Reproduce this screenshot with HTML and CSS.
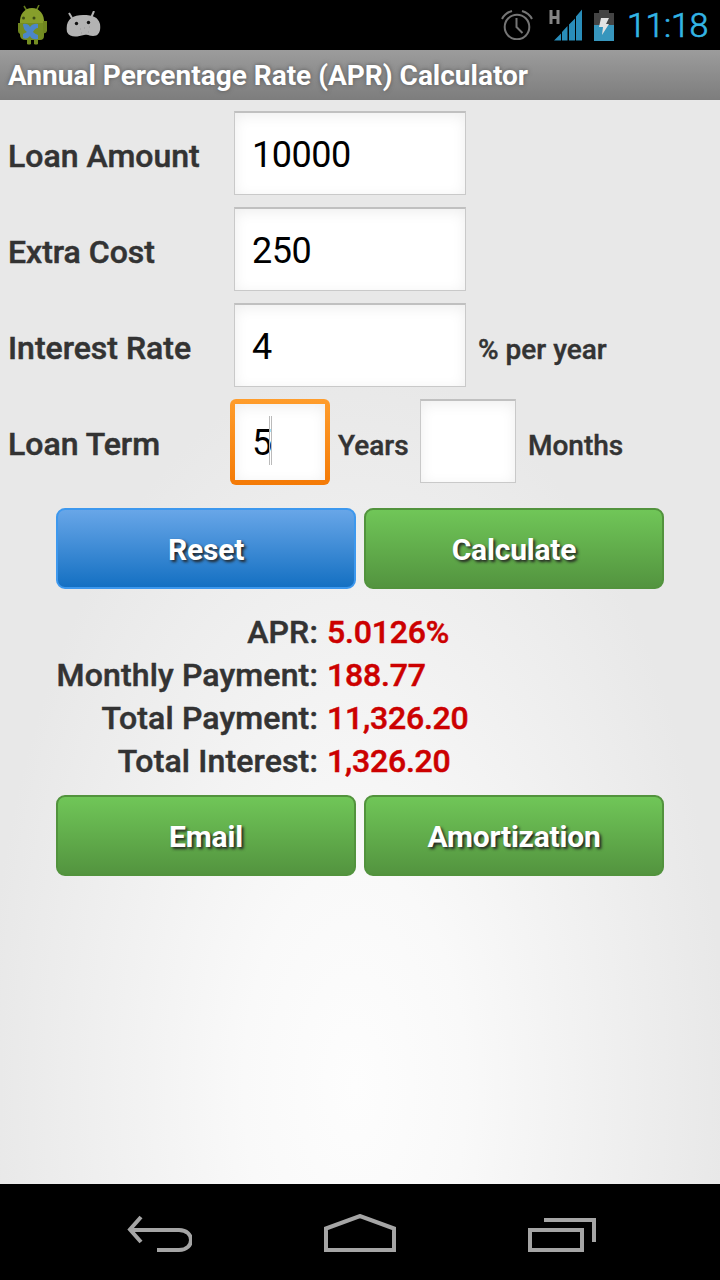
FILE: index.html
```html
<!DOCTYPE html>
<html lang="en">
<head>
  <meta charset="utf-8">
  <title>Annual Percentage Rate (APR) Calculator</title>
  <link rel="stylesheet" href="styles.css">
</head>
<body>
  <div class="status-bar">
    <svg class="notification" width="32" height="40" viewBox="0 0 32 40">
      <path d="M6 1l3 5M21 0l-3 6" stroke="#647b1d" stroke-width="1.500"/>
      <path d="M2 19C1 9 7 3 14 3s13 6 12 16z" fill="#879e2b"/>
      <path d="M2 18h24v13q0 4-4 4h-2v4q-2 1-4 0v-4h-3v4q-2 1-4 0v-4H8q-6 0-6-5z" fill="#748d22"/>
      <path d="M0 18h2v11q-2-1-2-3zM25 16h4v10q-1 3-4 2z" fill="#6f851f"/>
      <circle cx="5.500" cy="13" r="1.500" fill="#3c4b16"/>
      <circle cx="16" cy="13" r="1.500" fill="#3c4b16"/>
      <path d="M5 19q5-1 7 3 3-4 8-3v4q-3 0-5 4 2 2 5 3v4q-6 1-8-3-3 4-7 2v-4l4-2q-4-3-4-8z" fill="#4b86c8"/>
    </svg>
    <svg class="notification debug" width="36" height="28" viewBox="0 0 36 28">
      <path d="M3 2l3 5M28 0l-3 7" stroke="#b3b3b3" stroke-width="2"/>
      <path d="M1 21C-1 9 6 4 17 4c10 0 15 2 17 9 1 7-1 12-7 12-4 0-4-2-9-1-7 2-14 3-17-3z" fill="#b3b3b3"/>
      <circle cx="10.500" cy="12.500" r="1.700" fill="#111"/>
      <circle cx="22.500" cy="11.500" r="1.700" fill="#111"/>
      <path d="M14 18h1M18 17h1M23 16h1M15 22h1M22 21h1" stroke="#999"/>
    </svg>
    <div class="status-icons">
      <svg width="32" height="30" viewBox="0 0 32 30" fill="none" stroke="#757575" stroke-width="2">
        <circle cx="16" cy="17" r="12.300"/>
        <path d="M15.500 8v9l6 6M1 9q3-6 10-8M21 1q7 2 10 8"/>
      </svg>
      <svg class="signal" width="34" height="34" viewBox="0 0 34 34">
        <path d="M2 2v14M9 2v14M2 9.500h8" stroke="#858585" stroke-width="3" fill="none"/>
        <path d="M5 32.500l7-7v7zM13 24l5.500-6v14.500H13zM20 16.500l6-6v22h-6zM27 8.500l6-7v31h-6z" fill="#298dba"/>
      </svg>
      <svg class="battery" width="20" height="32" viewBox="0 0 20 32">
        <path d="M0 4h5V1h10v3h5v12H0z" fill="#444"/>
        <path d="M0 16h20v16H0z" fill="#3796bd"/>
        <path d="M7 9h8l-3 6h3L8 26l1-8H5z" fill="#e3e3e3"/>
      </svg>
      <span class="clock">11:18</span>
    </div>
  </div>

  <h1 class="title-bar">Annual Percentage Rate (APR) Calculator</h1>

  <main class="content">
    <div class="form">
      <div class="row">
        <label class="label" for="amount">Loan Amount</label>
        <input class="field" id="amount" type="text" value="10000">
      </div>
      <div class="row">
        <label class="label" for="cost">Extra Cost</label>
        <input class="field" id="cost" type="text" value="250">
      </div>
      <div class="row">
        <label class="label" for="rate">Interest Rate</label>
        <input class="field" id="rate" type="text" value="4">
        <span class="unit">% per year</span>
      </div>
      <div class="row">
        <label class="label">Loan Term</label>
        <div class="focused">
          <div class="focused-inner">5<span class="cursor"></span></div>
        </div>
        <span class="unit years">Years</span>
        <input class="field small" type="text">
        <span class="unit">Months</span>
      </div>
    </div>

    <div class="buttons">
      <button class="button reset">Reset</button>
      <button class="button">Calculate</button>
    </div>

    <div class="results">
      <span class="name">APR:</span><span class="value">5.0126%</span>
      <span class="name">Monthly Payment:</span><span class="value">188.77</span>
      <span class="name">Total Payment:</span><span class="value">11,326.20</span>
      <span class="name">Total Interest:</span><span class="value">1,326.20</span>
    </div>

    <div class="buttons">
      <button class="button">Email</button>
      <button class="button">Amortization</button>
    </div>
  </main>

  <div class="nav-bar">
    <svg width="67" height="38" viewBox="0 0 67 38" fill="none" stroke="#a5a5a5" stroke-width="4">
      <path d="M16 3L5 15.500 16 28M5 16h49c16 0 16 20 0 20H32"/>
    </svg>
    <svg width="72" height="38" viewBox="0 0 72 38" fill="none" stroke="#a5a5a5" stroke-width="4">
      <path d="M2 36V14.500L36 2l34 12.500V36z"/>
    </svg>
    <svg width="68" height="38" viewBox="0 0 68 38" fill="none" stroke="#a5a5a5" stroke-width="4">
      <path d="M16 6h50v22M2 16h52v20H2z"/>
    </svg>
  </div>
</body>
</html>
```
FILE: styles.css
```css
* {
  box-sizing: border-box;
}

body {
  margin: 0;
  height: 1280px;
  display: flex;
  flex-direction: column;
  font-family: Roboto, sans-serif;
  color: #333;
  background: #000;
}

.status-bar {
  height: 50px;
  padding: 0 12px 0 18px;
  display: flex;
  align-items: center;
}

.debug {
  margin-left: 16px;
}

.status-icons {
  margin-left: auto;
  display: flex;
  align-items: center;
}

.signal {
  margin-left: 16px;
}

.battery {
  margin-left: 11px;
}

.clock {
  width: 82px;
  margin-left: 12px;
  font-size: 34px;
  line-height: 52px;
  font-weight: 300;
  letter-spacing: -0.3px;
  text-align: right;
  color: #33b5e5;
  -webkit-text-stroke: 0.7px;
}

.title-bar {
  margin: 0;
  height: 50px;
  padding-left: 8px;
  font-size: 28px;
  line-height: 52px;
  font-weight: 700;
  color: #fff;
  text-shadow: 0 0 4px #555;
  background: linear-gradient(#9c9c9c, #7d7d7d);
}

.content {
  height: 1084px;
  padding-top: 5px;
  background: radial-gradient(ellipse 370px 720px at 355px 985px, #fdfdfd, #f9f9f9 30%, #e8e8e8);
}

.row {
  height: 96px;
  padding-left: 8px;
  display: flex;
  align-items: center;
}

.label {
  width: 226px;
  padding-top: 5px;
  font-size: 32px;
  font-weight: 500;
  -webkit-text-stroke: 0.5px;
}

.field {
  width: 232px;
  height: 84px;
  padding: 2px 17px 0;
  font: 36px Roboto, sans-serif;
  letter-spacing: -0.5px;
  color: #000;
  border: 1px solid #c9c9c9;
  border-top: 2px solid #c0c0c0;
  background: #fff;
  box-shadow: inset 0 3px 14px #eee;
}

.small {
  width: 96px;
}

.unit {
  padding-top: 9px;
  margin-left: 12px;
  font-size: 28px;
  font-weight: 500;
  -webkit-text-stroke: 0.4px;
}

/* active field with the orange frame */
.focused {
  width: 100px;
  height: 86px;
  margin: 2px 0 0 -4px;
  padding: 5px;
  border-radius: 6px;
  background: linear-gradient(#ff9d2c, #f47a06);
}

.focused-inner {
  height: 76px;
  padding: 2px 0 0 17px;
  display: flex;
  align-items: center;
  font-size: 36px;
  color: #000;
  background: #fff;
  box-shadow: inset 0 3px 14px #eee;
}

.cursor {
  width: 3px;
  height: 49px;
  margin: -5px 0 0 -3px;
  border: solid #bbb;
  border-width: 0 1px;
}

.years {
  width: 82px;
  margin-left: 8px;
}

.buttons {
  padding: 0 56px;
  display: flex;
  gap: 8px;
}

.form {
  padding-bottom: 19px;
}

.button {
  width: 300px;
  height: 81px;
  padding: 1px 0 0;
  font: 700 30px Roboto, sans-serif;
  letter-spacing: -0.2px;
  color: #fff;
  text-shadow: 2px 2px 3px #222;
  border: 2px solid #52933d;
  border-radius: 9px;
  background: linear-gradient(#70c658, #53943f);
}

.reset {
  border-color: #3d98ee;
  background: linear-gradient(#68a6e8, #1470c2);
}

.results {
  padding: 22px 0 12px;
  display: grid;
  grid-template-columns: 318px auto;
  column-gap: 9px;
  font-size: 32px;
  line-height: 43px;
  font-weight: 500;
  -webkit-text-stroke: 0.5px;
}

.name {
  text-align: right;
  letter-spacing: 0.15px;
}

.value {
  letter-spacing: -0.2px;
  color: #c00;
}

.nav-bar {
  height: 96px;
  display: flex;
  align-items: center;
  justify-content: space-between;
  padding: 2px 124px 0 125px;
}
```
